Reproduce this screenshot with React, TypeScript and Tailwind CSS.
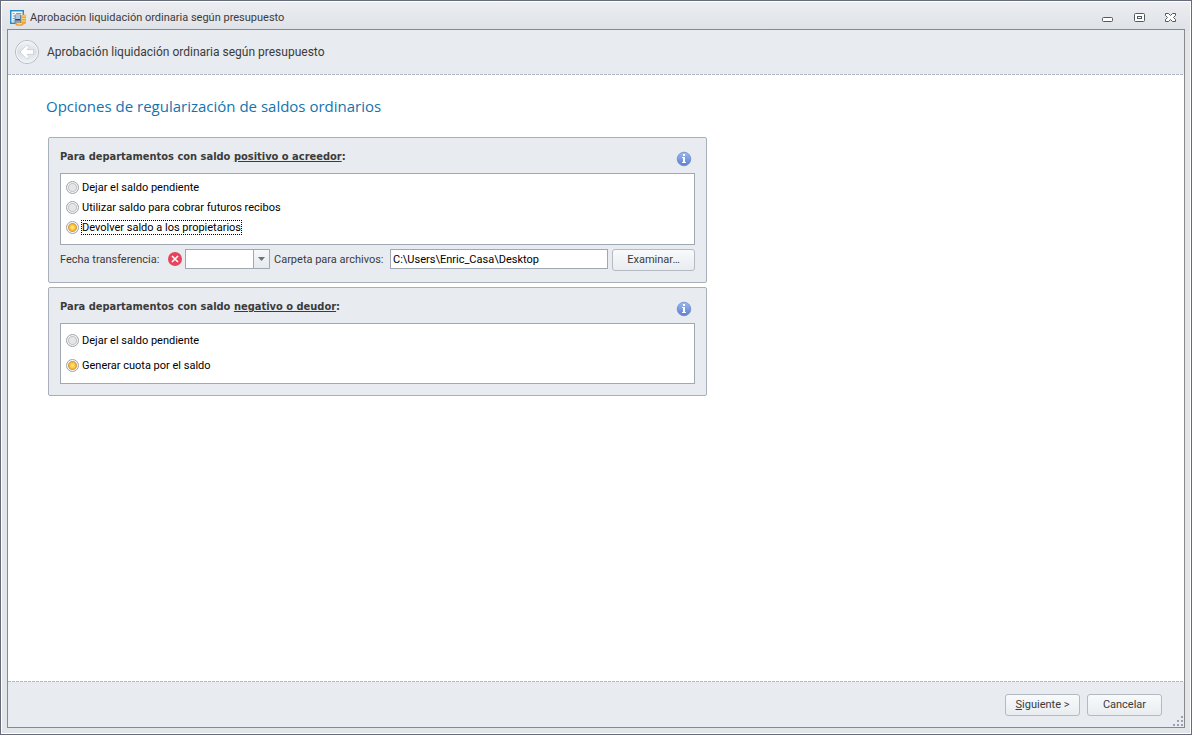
import { useState } from "react";
import type { ReactNode } from "react";

function AppIcon() {
  return (
    <svg width="17" height="17" viewBox="0 0 17 17" className="shrink-0" aria-hidden="true">
      <rect x="0.750" y="0.750" width="12.500" height="12.500" fill="#fff" stroke="#2b8cc4" strokeWidth="1.500" />
      <path d="M2.500 3.500h2M6 3.500h5.500M2.500 6h2M2.500 8.500h2M2.500 11h2" stroke="#6aa5cb" />
      <rect x="4.500" y="4.500" width="6.500" height="9.500" rx="0.500" fill="#6f8398" />
      <rect x="5.500" y="5" width="4.500" height="4" fill="#a9c8e8" />
      <rect x="5.500" y="9" width="4.500" height="1.500" fill="#34404e" />
      <rect x="5.500" y="10.500" width="4.500" height="3" fill="#8fa2b4" />
      <rect x="11" y="4.500" width="5" height="9.500" rx="1.200" fill="#f0a62f" />
      <path d="M11.500 6h4M11.500 8.500h4M11.500 11h4" stroke="#fbd98a" />
      <ellipse cx="9.500" cy="14.200" rx="4" ry="1.600" fill="#ec9d2a" />
      <ellipse cx="9.500" cy="13.800" rx="3" ry="0.700" fill="#fbdc90" />
    </svg>
  );
}

function BackIcon() {
  return (
    <svg width="26" height="26" viewBox="0 0 26 26" aria-hidden="true">
      <defs>
        <linearGradient id="back" x1="0" y1="0" x2="0" y2="1">
          <stop offset="0" stopColor="#f3f5f8" />
          <stop offset="0.5" stopColor="#dbe0e5" />
          <stop offset="1" stopColor="#eef4f7" />
        </linearGradient>
      </defs>
      <circle cx="13" cy="13" r="11.500" fill="url(#back)" stroke="#b3bac4" />
      <circle cx="13" cy="13" r="10.500" fill="none" stroke="#f5f8fa" />
      <path
        d="M6 13l6.200-6.300h2.600v2.100L13 10.700h6.500v4.600H13l1.800 1.900v2.100h-2.600z"
        fill="#fff"
        stroke="#c3cad1"
        strokeWidth="0.700"
      />
    </svg>
  );
}

function InfoIcon() {
  return (
    <svg width="16" height="16" viewBox="0 0 16 16" role="img" aria-label="Información">
      <defs>
        <linearGradient id="info" x1="0" y1="0" x2="0" y2="1">
          <stop offset="0" stopColor="#9db9ee" />
          <stop offset="1" stopColor="#5b7fd0" />
        </linearGradient>
      </defs>
      <circle cx="8" cy="8" r="6.800" fill="url(#info)" stroke="#6c8bcb" strokeWidth="0.800" />
      <rect x="7" y="3" width="2" height="2" fill="#fff" />
      <path d="M6 6h3v5h1v1H6v-1h1V7H6z" fill="#fff" />
    </svg>
  );
}

function ErrorIcon() {
  return (
    <svg width="14" height="14" viewBox="0 0 14 14" role="img" aria-label="Error">
      <circle cx="7" cy="7" r="7" fill="#e5445c" />
      <path d="M4 4l6 6M10 4L4 10" stroke="#fff" strokeWidth="1.600" />
    </svg>
  );
}

function Dashes() {
  return (
    <div className="h-px shrink-0 bg-[repeating-linear-gradient(90deg,#b0b8c6_0_3px,#f4f5f7_3px_4px)]" />
  );
}

function Button({ children, className = "" }: { children: ReactNode; className?: string }) {
  return (
    <button
      type="button"
      className={`h-[22px] shrink-0 rounded-[3px] border border-[#b4bac2] bg-linear-to-b from-[#f8fafb] to-[#e9edf0] pt-px text-center text-[#3b3b3b] ${className}`}
    >
      {children}
    </button>
  );
}

type RadioListProps = {
  name: string;
  options: string[];
  initial: string;
  focused?: string;
  className: string;
};

function RadioList({ name, options, initial, focused, className }: RadioListProps) {
  const [value, setValue] = useState(initial);
  return (
    <div className={`flex flex-col border border-[#a0a8b4] bg-white px-[5px] text-black ${className}`}>
      {options.map((option) => (
        <label key={option} className="flex h-[15px] items-center gap-[2px]">
          <input
            type="radio"
            name={name}
            checked={value === option}
            onChange={() => setValue(option)}
            className="size-[13px] shrink-0 appearance-none rounded-full border border-[#9da3ad] bg-[radial-gradient(circle,#e6e6e6_0_3px,#c4c4c4_4px,#f4f5f6_5px)] checked:bg-[radial-gradient(circle,#ffe66a_0_1px,#f9bb2d_3px,#d99a45_4px,#f7f8f9_5px)]"
          />
          <span
            className={`border pt-px leading-3 ${option === focused ? "border-dotted border-black" : "border-transparent"}`}
          >
            {option}
          </span>
        </label>
      ))}
    </div>
  );
}

function Group({
  title,
  subject,
  children,
}: {
  title: string;
  subject: string;
  children: ReactNode;
}) {
  return (
    <section className="w-full max-w-[659px] rounded-[2px] border border-[#a9b0bc] bg-[#e8ebf0] px-[11px] pb-[11px]">
      <div className="flex h-[35px] justify-between pr-[3px]">
        <h2 className="pt-[11px] font-['DejaVu_Sans_Condensed',sans-serif] leading-4 font-bold text-[#3b3b3b]">
          {title} <span className="underline">{subject}</span>:
        </h2>
        <div className="pt-[13px]">
          <InfoIcon />
        </div>
      </div>
      {children}
    </section>
  );
}

export default function App() {
  const [date, setDate] = useState("");
  const [folder, setFolder] = useState("C:\\Users\\Enric_Casa\\Desktop");

  return (
    <div className="flex min-h-screen flex-col border border-[#656b78] bg-[#e3e6e8] font-[Roboto,'Noto_Sans',sans-serif] text-[11px] text-[#3b3b3b]">
      <div className="flex grow flex-col border border-white bg-[linear-gradient(#ebedf1,#dfe2e6_28px,#e3e6e8_29px)] px-[5px] pb-[5px]">
        <header className="flex h-[27px] shrink-0 items-center gap-[3px] pt-[5px] pl-[3px]">
          <AppIcon />
          <span className="grow">Aprobación liquidación ordinaria según presupuesto</span>
          <div className="flex items-center gap-5 pr-2">
            <button type="button" aria-label="Minimizar" className="size-3">
              <svg width="12" height="12" viewBox="0 0 12 12" aria-hidden="true">
                <rect x="1.500" y="5.500" width="10" height="4" rx="1" fill="#fff" stroke="#54585f" />
              </svg>
            </button>
            <button type="button" aria-label="Maximizar" className="size-3">
              <svg width="12" height="12" viewBox="0 0 12 12" aria-hidden="true">
                <rect x="1.500" y="1.500" width="10" height="8" rx="1" fill="#fff" stroke="#54585f" />
                <rect x="4.500" y="4.500" width="4" height="2" fill="#fff" stroke="#54585f" />
              </svg>
            </button>
            <button type="button" aria-label="Cerrar" className="size-3">
              <svg width="12" height="12" viewBox="0 0 12 12" aria-hidden="true">
                <path
                  d="M0.500 1.500h3l2 2 2-2h3v2l-2 2 2 2v2h-3l-2-2-2 2h-3v-2l2-2-2-2z"
                  fill="#fff"
                  stroke="#54585f"
                />
              </svg>
            </button>
          </div>
        </header>

        <div className="flex grow flex-col border border-[#868a8c] bg-white">
          <div className="flex h-11 shrink-0 items-center gap-[7px] bg-[#e8ebf0] pl-[6px] text-[12px]">
            <button type="button" aria-label="Atrás" className="size-[26px]">
              <BackIcon />
            </button>
            <span>Aprobación liquidación ordinaria según presupuesto</span>
          </div>
          <Dashes />

          <main className="flex grow flex-col gap-1 px-10 pb-6">
            <h1 className="-ml-[2px] pt-[19px] pb-[15px] font-['Open_Sans',sans-serif] text-[15px] leading-6 text-[#1373ae]">
              Opciones de regularización de saldos ordinarios
            </h1>

            <Group title="Para departamentos con saldo" subject="positivo o acreedor">
              <RadioList
                name="positivo"
                options={[
                  "Dejar el saldo pendiente",
                  "Utilizar saldo para cobrar futuros recibos",
                  "Devolver saldo a los propietarios",
                ]}
                initial="Devolver saldo a los propietarios"
                focused="Devolver saldo a los propietarios"
                className="h-[72px] gap-[5px] pt-[6px]"
              />
              <div className="flex h-[26px] items-start pt-1">
                <label htmlFor="fecha" className="w-[108px] shrink-0 leading-[22px]">
                  Fecha transferencia:
                </label>
                <div className="w-[17px] shrink-0 pt-[3px]">
                  <ErrorIcon />
                </div>
                <div className="flex h-5 w-[85px] shrink-0 border border-[#a0a8b4] bg-white">
                  <input
                    id="fecha"
                    value={date}
                    onChange={(e) => setDate(e.target.value)}
                    className="min-w-0 grow px-[2px] text-black outline-none"
                  />
                  <button
                    type="button"
                    aria-label="Abrir calendario"
                    className="flex w-4 shrink-0 items-center justify-center border-l border-[#a0a8b4] bg-linear-to-b from-[#f6f8fa] to-[#e6eaee]"
                  >
                    <svg width="7" height="4" viewBox="0 0 7 4" aria-hidden="true">
                      <path d="M0 0h7L3.500 4z" fill="#6e7278" />
                    </svg>
                  </button>
                </div>
                <label htmlFor="carpeta" className="w-[120px] shrink-0 pl-1 leading-[22px]">
                  Carpeta para archivos:
                </label>
                <input
                  id="carpeta"
                  value={folder}
                  onChange={(e) => setFolder(e.target.value)}
                  className="h-5 min-w-0 grow border border-[#a0a8b4] bg-white px-[2px] text-black outline-none"
                />
                <Button className="ml-1 w-[83px]">Examinar…</Button>
              </div>
            </Group>

            <Group title="Para departamentos con saldo" subject="negativo o deudor">
              <RadioList
                name="negativo"
                options={["Dejar el saldo pendiente", "Generar cuota por el saldo"]}
                initial="Generar cuota por el saldo"
                className="h-[61px] gap-[10px] pt-[9px]"
              />
            </Group>
          </main>

          <Dashes />
          <footer className="relative flex h-[45px] shrink-0 justify-end gap-[7px] bg-[#e8ebf0] pt-3 pr-[22px]">
            <Button className="w-[75px]">
              <span className="underline">S</span>iguiente &gt;
            </Button>
            <Button className="w-[75px]">Cancelar</Button>
            <svg width="12" height="11" viewBox="0 0 12 11" aria-hidden="true" className="absolute right-0 bottom-0">
              <path
                d="M9 0h2v2H9zM5 4h2v2H5zM9 4h2v2H9zM1 8h2v2H1zM5 8h2v2H5zM9 8h2v2H9z"
                fill="#9aa1ac"
              />
            </svg>
          </footer>
        </div>
      </div>
    </div>
  );
}
